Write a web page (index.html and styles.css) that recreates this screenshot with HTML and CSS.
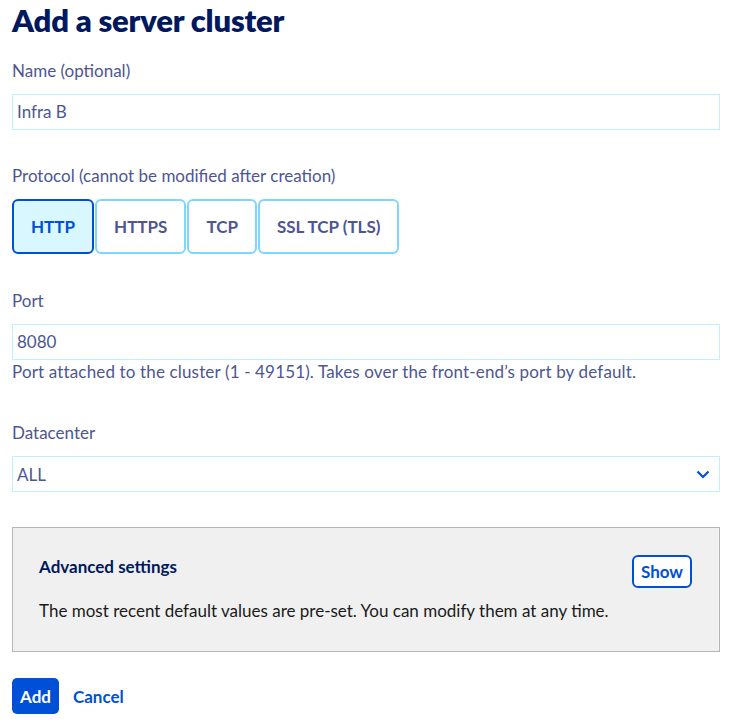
FILE: index.html
```html
<!DOCTYPE html>
<html lang="en">
<head>
<meta charset="utf-8">
<title>Add a server cluster</title>
<link rel="stylesheet" href="styles.css">
</head>
<body>
<main class="page">
  <h1 class="title">Add a server cluster</h1>

  <div class="field">
    <label class="label">Name (optional)</label>
    <div class="input">Infra B</div>
  </div>

  <div class="field">
    <label class="label">Protocol (cannot be modified after creation)</label>
    <div class="tiles">
      <button class="tile tile-active">HTTP</button>
      <button class="tile">HTTPS</button>
      <button class="tile">TCP</button>
      <button class="tile">SSL TCP (TLS)</button>
    </div>
  </div>

  <div class="field">
    <label class="label">Port</label>
    <div class="input">8080</div>
    <p class="help">Port attached to the cluster (1 - 49151). Takes over the front-end’s port by default.</p>
  </div>

  <div class="field">
    <label class="label">Datacenter</label>
    <div class="input select">
      <span>ALL</span>
      <svg class="chevron" width="14" height="9" viewBox="0 0 14 9"><path d="M1.5 1.5 L7 7 L12.5 1.5" fill="none" stroke="#0050d7" stroke-width="2.2"/></svg>
    </div>
  </div>

  <section class="advanced">
    <div class="adv-head">
      <h2 class="adv-title">Advanced settings</h2>
      <button class="btn-outline">Show</button>
    </div>
    <p class="adv-text">The most recent default values are pre-set. You can modify them at any time.</p>
  </section>

  <div class="actions">
    <button class="btn-primary">Add</button>
    <button class="btn-link">Cancel</button>
  </div>
</main>
</body>
</html>
```

FILE: styles.css
```css
* { box-sizing: border-box; }
html, body { margin: 0; padding: 0; background: #fff; }
body {
  font-family: Lato, "Noto Sans", sans-serif;
  font-size: 17px;
  color: #4d5693;
}
.page { padding: 0 12px; width: 732px; }
.title {
  margin: 0;
  font-size: 31px;
  line-height: 40px;
  font-weight: 800;
  color: #00185e;
  letter-spacing: -0.2px;
}
.field { display: flex; flex-direction: column; margin-bottom: 35px; }
.field:first-of-type { margin-top: 19px; margin-bottom: 34px; }
.label { line-height: 24px; margin-bottom: 11px; color: #4d5693; }
.input {
  height: 36px;
  border: 1px solid #bef1ff;
  padding: 0 4px 2px;
  display: flex;
  align-items: center;
  color: #4d5693;
  background: #fff;
}
.select { justify-content: space-between; padding-right: 9px; padding-bottom: 0; }
.help { margin: 0; line-height: 24px; color: #4d5693; margin-bottom: 2px; letter-spacing: 0.15px; }
.tiles { display: flex; gap: 1px; }
.tile {
  font-family: inherit;
  font-size: 17px;
  font-weight: 700;
  color: #4d5693;
  height: 55px;
  padding: 0 17px;
  border: 2px solid #7dd6fd;
  border-radius: 6px;
  background: #fff;
}
.tile-active {
  background: #d8f7ff;
  border-color: #0050d7;
  color: #0050d7;
}
.advanced {
  background: #f0f0f0;
  border: 1px solid #b5b5b5;
  padding: 27px 27px 28px 26px;
  margin-bottom: 26px;
}
.adv-head { display: flex; justify-content: space-between; align-items: flex-start; }
.adv-title { margin: 0; font-size: 17px; line-height: 24px; font-weight: 700; color: #00185e; }
.btn-outline {
  font-family: inherit;
  font-size: 17px;
  font-weight: 700;
  color: #0050d7;
  background: #fff;
  border: 2px solid #0050d7;
  border-radius: 6px;
  height: 33px;
  padding: 0 7px;
}
.adv-text { margin: 11px 0 0; line-height: 24px; color: #1a1a1a; }
.actions { display: flex; align-items: center; gap: 14px; }
.btn-primary {
  font-family: inherit;
  font-size: 17px;
  font-weight: 700;
  color: #fff;
  background: #0050d7;
  border: none;
  border-radius: 5px;
  height: 36px;
  padding: 0 8px;
}
.btn-link {
  font-family: inherit;
  font-size: 17px;
  font-weight: 700;
  color: #0050d7;
  background: none;
  border: none;
  padding: 0;
}
```
